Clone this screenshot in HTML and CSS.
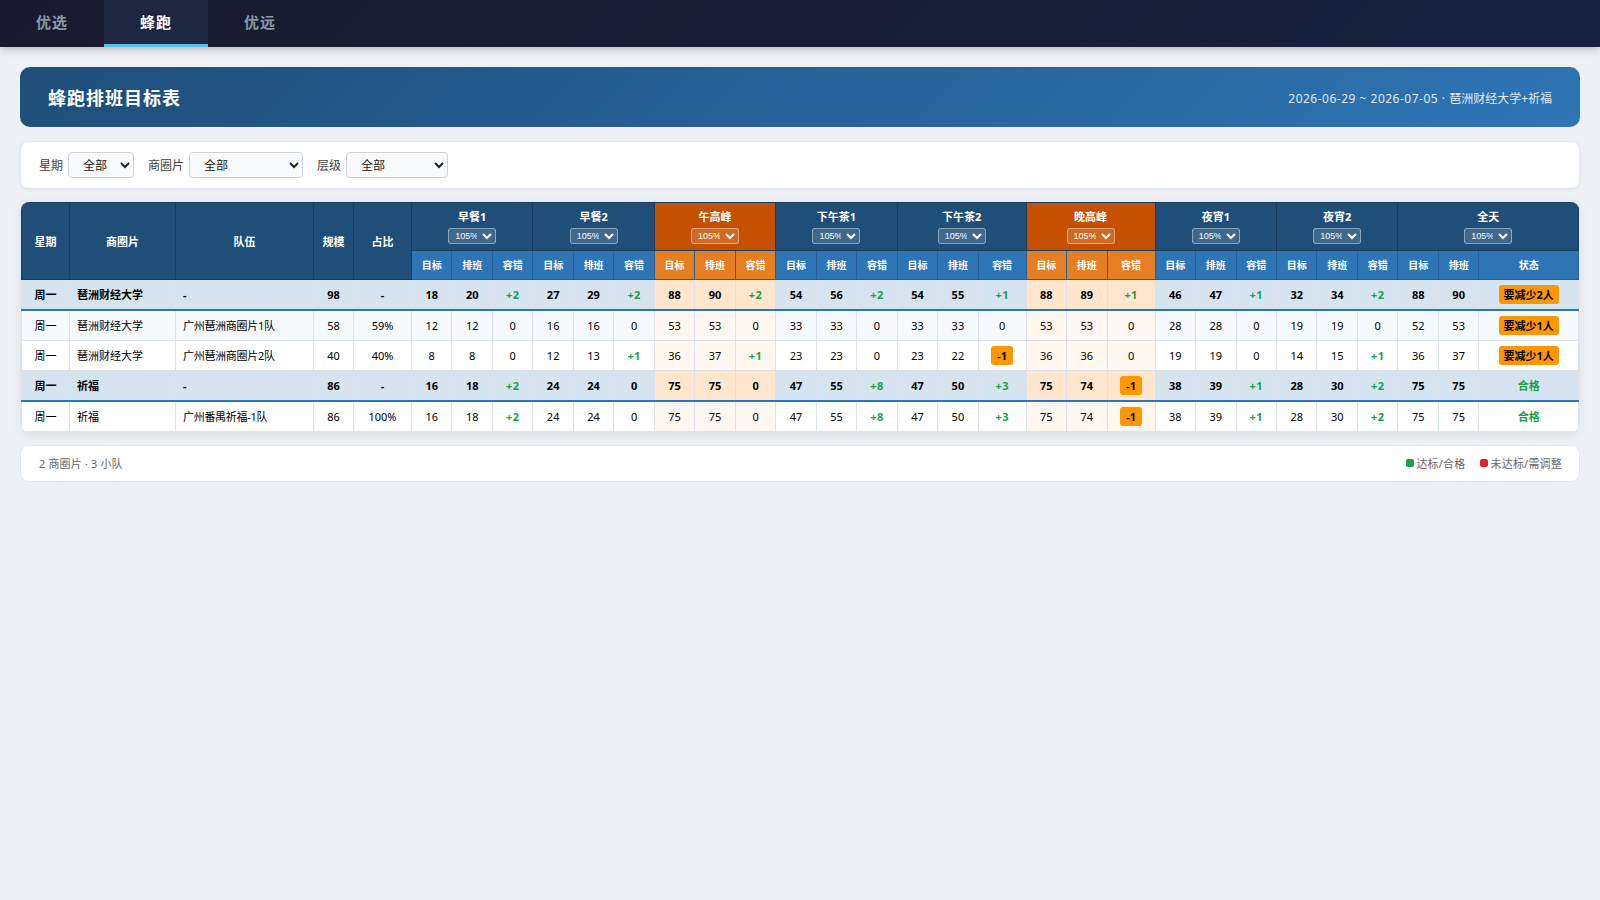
FILE: index.html
```
<!DOCTYPE html>
<html lang="zh-CN">
<head>
    <meta charset="UTF-8">
    <meta name="viewport" content="width=device-width, initial-scale=1.0">
    <title>蜂跑排班目标表</title>
    <link rel="stylesheet" href="styles.css">
</head>
<body>
    <nav class="tabs">
        <a class="tab">优选</a>
        <a class="tab active">蜂跑</a>
        <a class="tab">优远</a>
    </nav>

    <main class="page">
        <header class="header">
            <h1>蜂跑排班目标表</h1>
            <span class="meta"><span class="dates">2026-06-29 ~ 2026-07-05 · </span>琶洲财经大学+祈福</span>
        </header>

        <div class="filters">
            <div class="filter">
                <label for="day">星期</label>
                <select id="day" class="day-select"><option>全部</option></select>
            </div>
            <div class="filter">
                <label for="area">商圈片</label>
                <select id="area" class="area-select"><option>全部</option></select>
            </div>
            <div class="filter">
                <label for="level">层级</label>
                <select id="level" class="level-select"><option>全部</option></select>
            </div>
        </div>

        <div class="table-wrap">
            <table>
                <colgroup id="cols">
                    <col class="c-day"><col class="c-area"><col class="c-team"><col class="c-size"><col class="c-ratio">
                </colgroup>
                <thead>
                    <tr class="groups" id="groups">
                        <th rowspan="2">星期</th>
                        <th rowspan="2">商圈片</th>
                        <th rowspan="2">队伍</th>
                        <th rowspan="2">规模</th>
                        <th rowspan="2">占比</th>
                    </tr>
                    <tr class="subs" id="subs"></tr>
                </thead>
                <tbody id="rows"></tbody>
            </table>
        </div>

        <footer class="footer">
            <span class="count">2 商圈片 · 3 小队</span>
            <div class="legend">
                <span class="item"><i class="dot ok"></i>达标/合格</span>
                <span class="item bad-item"><i class="dot bad"></i>未达标/需调整</span>
            </div>
        </footer>
    </main>

    <script>
        const periods = ['早餐1', '早餐2', '午高峰', '下午茶1', '下午茶2', '晚高峰', '夜宵1', '夜宵2'];
        const peaks = [2, 5];
        // 含 -1 标签的容错列更宽
        const wide = [4, 5];

        // 每个时段: [目标, 排班], 最后一组为全天
        const data = [
            { area: '琶洲财经大学', team: '-', size: 98, ratio: '-', total: true, status: '要减少2人',
              v: [[18, 20], [27, 29], [88, 90], [54, 56], [54, 55], [88, 89], [46, 47], [32, 34], [88, 90]] },
            { area: '琶洲财经大学', team: '广州琶洲商圈片1队', size: 58, ratio: '59%', status: '要减少1人',
              v: [[12, 12], [16, 16], [53, 53], [33, 33], [33, 33], [53, 53], [28, 28], [19, 19], [52, 53]] },
            { area: '琶洲财经大学', team: '广州琶洲商圈片2队', size: 40, ratio: '40%', status: '要减少1人',
              v: [[8, 8], [12, 13], [36, 37], [23, 23], [23, 22], [36, 36], [19, 19], [14, 15], [36, 37]] },
            { area: '祈福', team: '-', size: 86, ratio: '-', total: true, status: '合格',
              v: [[16, 18], [24, 24], [75, 75], [47, 55], [47, 50], [75, 74], [38, 39], [28, 30], [75, 75]] },
            { area: '祈福', team: '广州番禺祈福-1队', size: 86, ratio: '100%', status: '合格',
              v: [[16, 18], [24, 24], [75, 75], [47, 55], [47, 50], [75, 74], [38, 39], [28, 30], [75, 75]] }
        ];

        const rate = '<select class="rate"><option>105%</option></select>';
        let cols = '', groups = '', subs = '';

        periods.forEach((name, i) => {
            const cls = peaks.includes(i) ? 'peak' : '';
            cols += `<col class="c-num"><col class="c-num"><col class="${wide.includes(i) ? 'c-wide' : 'c-num'}">`;
            groups += `<th colspan="3" class="group ${cls}"><div>${name}</div>${rate}</th>`;
            subs += `<th class="${cls}">目标</th><th class="${cls}">排班</th><th class="${cls}">容错</th>`;
        });
        cols += '<col class="c-num"><col class="c-num"><col>';
        groups += `<th colspan="3" class="group"><div>全天</div>${rate}</th>`;
        subs += '<th>目标</th><th>排班</th><th>状态</th>';

        document.getElementById('cols').innerHTML += cols;
        document.getElementById('groups').innerHTML += groups;
        document.getElementById('subs').innerHTML = subs;

        function diffCell(n) {
            if (n > 0) return `<span class="good plus">+${n}</span>`;
            if (n < 0) return `<span class="tag num">${n}</span>`;
            return '0';
        }

        document.getElementById('rows').innerHTML = data.map(r => {
            let html = `<td>周一</td><td class="left">${r.area}</td><td class="left team">${r.team}</td><td>${r.size}</td><td>${r.ratio}</td>`;
            r.v.forEach(([goal, plan], i) => {
                const cls = peaks.includes(i) ? 'peak' : '';
                html += `<td class="${cls}">${goal}</td><td class="${cls}">${plan}</td>`;
                if (i < 8) html += `<td class="${cls}">${diffCell(plan - goal)}</td>`;
            });
            html += `<td><span class="${r.status === '合格' ? 'good' : 'tag'}">${r.status}</span></td>`;
            return `<tr class="${r.total ? 'total' : ''}">${html}</tr>`;
        }).join('');
    </script>
</body>
</html>
```
FILE: styles.css
```
* {
    margin: 0;
    padding: 0;
    box-sizing: border-box;
}

body {
    font-family: "Noto Sans", "Noto Sans CJK SC", sans-serif;
    background: #edf1f6;
    color: #000;
}

.tabs {
    display: flex;
    height: 47px;
    background: linear-gradient(135deg, #1a1a2e, #16213e);
    box-shadow: 0 2px 8px rgba(0, 0, 0, 0.25);
}

.tab {
    width: 104px;
    padding-left: 36px;
    line-height: 44px;
    font-size: 15px;
    font-weight: 600;
    letter-spacing: 1px;
    color: #8899aa;
    border-bottom: 3px solid transparent;
}

.tab.active {
    color: #fff;
    background: rgba(79, 195, 247, 0.08);
    border-bottom-color: #4fc3f7;
}

.page {
    padding: 20px;
}

.header {
    display: flex;
    justify-content: space-between;
    align-items: center;
    height: 60px;
    padding: 1px 28px 0;
    margin-bottom: 14px;
    border-radius: 10px;
    background: linear-gradient(135deg, #1f4e79, #2e75b6);
    color: #fff;
}

.header h1 {
    padding-top: 1px;
    font-size: 18px;
    line-height: 24px;
    letter-spacing: 1px;
}

.meta {
    font-size: 12px;
    opacity: 0.85;
}

.dates {
    letter-spacing: 0.5px;
}

.filters {
    display: flex;
    align-items: center;
    gap: 14px;
    height: 48px;
    padding: 0 18px;
    margin-bottom: 13px;
    background: #fff;
    border: 1px solid #e2e6f0;
    border-radius: 8px;
    box-shadow: 0 1px 4px rgba(0, 0, 0, 0.05);
}

.filter {
    display: flex;
    align-items: center;
    gap: 5px;
    font-size: 12px;
    color: #444;
}

.filter select {
    height: 26px;
    padding: 0 10px;
    font-family: inherit;
    font-size: 12px;
    color: #222;
    background: #f9fafc;
    border: 1px solid #cdd3e0;
    border-radius: 4px;
}

.filter .day-select {
    width: 66px;
}

.filter .area-select {
    width: 114px;
}

.filter .level-select {
    width: 102px;
}

.table-wrap {
    margin: 0 1px 13px;
    background: #fff;
    border-radius: 8px;
    overflow: hidden;
    box-shadow: 0 2px 12px rgba(0, 0, 0, 0.08);
}

table {
    width: 100%;
    table-layout: fixed;
    border-collapse: collapse;
    font-size: 11px;
    line-height: 15px;
}

.c-day { width: 48px; }
.c-area { width: 106px; }
.c-team { width: 138px; }
.c-size { width: 40px; }
.c-ratio { width: 58px; }
.c-num { width: 40.48px; }
.c-wide { width: 48px; }

th {
    color: #fff;
    text-align: center;
    vertical-align: middle;
}

.groups th {
    height: 48px;
    background: #1f4e79;
    border: 1px solid #1a3c5e;
}

.groups .group {
    padding-bottom: 1px;
}

.groups th.peak {
    background: #c55000;
}

.subs th {
    height: 29px;
    font-size: 10px;
    background: #2e75b6;
    border: 1px solid #245f99;
}

.subs th.peak {
    background: #e67e22;
}

.rate {
    display: block;
    width: 48px;
    height: 16px;
    margin: 4px auto 0;
    padding: 0 2px;
    font-family: "Liberation Sans", Arial, sans-serif;
    font-size: 9px;
    color: #fff;
    background: rgba(255, 255, 255, 0.15);
    border: 1px solid rgba(255, 255, 255, 0.4);
    border-radius: 3px;
}

td {
    height: 30px;
    text-align: center;
    white-space: nowrap;
    border: 1px solid #dde2ec;
}

td.left {
    text-align: left;
    padding-left: 7px;
}

td.team {
    letter-spacing: -0.3px;
}

td.peak {
    background: #fff7f0;
}

tbody tr:nth-child(2) td:not(.peak) {
    background: #f7fafd;
}

.total td {
    font-weight: 700;
    background: #d6e4f0;
    border-bottom: 2px solid #2e75b6;
}

.total + tr td {
    height: 31px;
}

.total td.peak {
    background: #ffe6cc;
}

.good {
    color: #16a34a;
    font-weight: 700;
}

.plus {
    letter-spacing: 0.4px;
}

.tag {
    display: inline-block;
    padding: 2px 5px;
    font-weight: 700;
    background: #ff9800;
    border-radius: 3px;
}

.tag.num {
    padding: 2px 6px;
}

.footer {
    display: flex;
    justify-content: space-between;
    align-items: center;
    height: 37px;
    padding: 0 17px 1px 18px;
    font-size: 11px;
    color: #666;
    background: #fff;
    border: 1px solid #e2e6f0;
    border-radius: 8px;
}

.count {
    letter-spacing: 0.15px;
}

.legend {
    display: flex;
    gap: 14px;
    letter-spacing: 0.2px;
}

.item {
    display: flex;
    align-items: center;
    gap: 2px;
}

.bad-item {
    gap: 3px;
}

.dot {
    width: 8px;
    height: 8px;
    border-radius: 2px;
}

.dot.ok {
    background: #16a34a;
}

.dot.bad {
    background: #dc2626;
}
```
